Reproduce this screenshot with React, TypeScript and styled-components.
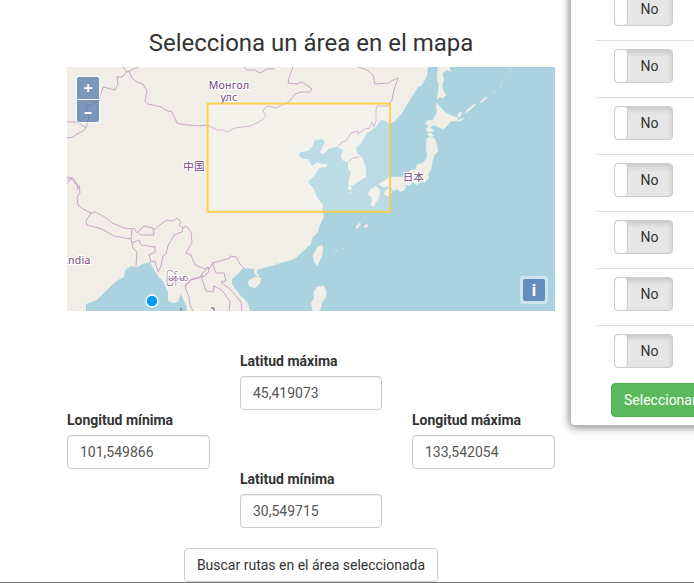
import React from "react";
import styled, { createGlobalStyle } from "styled-components";

const Global = createGlobalStyle`
  * { box-sizing: border-box; }
  html, body { margin: 0; overflow: hidden; background: #fff; }
  body { font: 14px/20px Roboto, sans-serif; color: #333; }
`;

const Page = styled.div`
  display: flex;
  align-items: flex-start;
  width: 694px;
  height: 583px;
  overflow: hidden;
  border-bottom: 1px solid #777;
`;

const Main = styled.main`
  width: 488px;
  margin: 0 15px 0 67px;
  padding-top: 30px;
  flex: none;
`;

const Title = styled.h3`
  margin: 0 0 10px;
  font-size: 24px;
  line-height: 27px;
  font-weight: 400;
  text-align: center;
`;

const MapFrame = styled.div`
  position: relative;
  height: 244px;
  svg { display: block; }
`;

const Control = styled.div<{ $corner: "zoom" | "info" }>`
  position: absolute;
  ${(p) => (p.$corner === "zoom" ? "left: 8px; top: 8px;" : "right: 7px; bottom: 7px;")}
  display: grid;
  gap: 1px;
  padding: ${(p) => (p.$corner === "zoom" ? "2px" : "3px")};
  border-radius: 4px;
  background: rgba(255, 255, 255, 0.4);
`;

const MapButton = styled.button<{ $part?: "top" | "bottom" }>`
  width: 22px;
  height: 22px;
  border: 0;
  padding: 0;
  color: #fff;
  background: ${(p) => (p.$part ? "rgba(0, 60, 136, 0.5)" : "rgba(46, 94, 164, 0.66)")};
  border-radius: ${(p) => (p.$part === "top" ? "2px 2px 0 0" : p.$part === "bottom" ? "0 0 2px 2px" : "2px")};
  font: 700 16px/22px "Open Sans", sans-serif;
`;

const Fields = styled.div`
  display: grid;
  grid-template-columns: 143px 142px 143px;
  grid-template-rows: repeat(3, 59px);
  column-gap: 30px;
  margin-top: 40px;
`;

const Field = styled.label<{ $col: number; $row: number }>`
  grid-column: ${(p) => p.$col};
  grid-row: ${(p) => p.$row};
  font-weight: 700;
  white-space: nowrap;
`;

const Input = styled.input`
  display: block;
  width: 100%;
  height: 34px;
  margin-top: 5px;
  padding: 6px 12px;
  border: 1px solid #ccc;
  border-radius: 4px;
  box-shadow: inset 0 1px 1px rgba(0, 0, 0, 0.075);
  color: #555;
  background: #fff;
  font: 14px/20px Roboto, sans-serif;
`;

const Button = styled.button<{ $green?: boolean }>`
  display: block;
  height: 34px;
  padding: 6px 12px;
  border: 1px solid ${(p) => (p.$green ? "#4cae4c" : "#ccc")};
  border-radius: 4px;
  color: ${(p) => (p.$green ? "#fff" : "#333")};
  background: ${(p) => (p.$green ? "#5cb85c" : "#fff")};
  font: 14px/20px Roboto, sans-serif;
  white-space: nowrap;
`;

const Actions = styled.div`
  display: flex;
  justify-content: center;
  margin-top: 20px;
`;

const Panel = styled.aside`
  width: 200px;
  height: 446px;
  margin-top: -20px;
  padding: 3px 0 0 25px;
  flex: none;
  border: 1px solid #bbb;
  border-radius: 4px;
  box-shadow: 0 1px 10px rgba(0, 0, 0, 0.55);
  background: #fff;
  margin-left: 0;
`;

const SwitchRow = styled.div`
  height: 57px;
  padding: 8px 0 0 18px;
  border-bottom: 1px solid #ddd;
  &:last-of-type { border-bottom: 0; }
`;

const Switch = styled.div`
  display: flex;
  width: 59px;
  height: 34px;
  border: 1px solid #ccc;
  border-radius: 4px;
  overflow: hidden;
  background: #e6e6e6;
  box-shadow: inset 0 3px 5px rgba(0, 0, 0, 0.125);
`;

const Handle = styled.span`
  width: 13px;
  border-right: 1px solid #ccc;
  border-radius: 4px;
  background: #fff;
`;

const SwitchText = styled.span`
  flex: 1;
  line-height: 32px;
  text-align: center;
  padding-right: 1px;
`;

const PanelAction = styled.footer`
  padding: 0 0 0 15px;
`;

const seaMain =
  "M428 67 427 75 425 80 421 86 418 87 413 95 408 103 402 113 395 121 390 124 385 121 382 120 380 121 376 127 367 133 362 142 356 148 357 153 362 157 366 168 366 177 358 182 354 185 349 186 348 182 351 173 348 168 348 163 349 161 346 162 342 160 341 155 343 150 337 147 328 149 326 152 322 154 320 152 325 142 322 139 315 140 312 147 308 151 300 152 299 156 303 159 308 159 312 166 318 162 321 164 327 164 327 167 319 168 315 175 308 182 314 189 317 197 323 205 322 212 324 216 319 227 318 232 312 238 311 244 301 253 296 258 289 261 280 263 278 265 276 262 276 265 267 267 257 270 257 274 259 275 258 277 254 273 254 269 243 268 239 273 232 279 232 284 236 290 241 296 248 303 250 311H555V67Z";

const landPieces = [
  "M438 67 437 78 439 85 438 94 437 99 440 97 443 98 446 95 443 91 442 85 444 79 442 74 446 70 451 71 449 67Z",
  "M437 103 441 108 446 113 452 116 458 118 456 121 451 121 446 127 443 129 434 125 430 127 434 131 428 132 426 129 429 126 425 124 428 120 432 121 434 118 437 112 436 106Z",
  "M427 138 431 137 435 139 437 146 438 151 434 155 432 162 431 170 428 174 429 178 424 183 420 180 417 185 413 182 410 185 403 185 401 188 397 187 391 188 387 186 382 187 379 184 384 181 388 178 394 177 402 177 407 174 411 170 415 170 418 165 424 162 427 158 427 153 426 149Z",
  "M427 134 431 133 434 136 430 137Z",
  "M370 190 376 186 380 190 379 198 375 203 374 207 371 205 372 198 368 194Z",
  "M385 191 390 188 392 192 388 196 384 194Z",
  "M392 188 400 185 406 186 405 189 401 192 397 189 393 191Z",
  "M322 245 323 247 322 255 317 266 314 261 313 255 318 247Z",
  "M251 279 256 277 261 278 260 283 255 288 249 286 248 282Z",
  "M317 287 324 286 326 291 326 297 322 302 321 308 319 311 313 311 311 303 314 299 314 292Z",
  "M417 165 419 164 418 167 422 169 417 170Z M457 116 460 112 462 113 460 117Z M466 111 473 105 476 104 471 109 466 113Z M480 102 486 97 487 98 482 102Z M456 121 464 118 461 121Z M349 186 352 188 351 190 348 189Z M356 226 360 223 361 224 357 229Z M364 226 367 224 368 226 365 228Z",
  "M493 94 496 91M500 87 503 81M508 73 511 68M334 251 338 250M342 249 344 248M349 185h5M348 193h4",
];

const borders = [
  "M123 67 127 72 138 67M127 72 122 77 117 77 118 84 115 90 103 87 99 101 86 107 89 118 86 128M67 122H77L86 128 83 131 75 135 73 137 67 138M129 71 132 78 137 82 143 84 147 91 145 101 148 104 162 107 165 110 172 112 177 123 180 124 197 126 207 125 217 130 224 130 227 132 235 128 250 126 257 123 262 120 266 116 263 111 267 106 276 108 289 102 295 94 301 92 310 92 312 89 302 82 297 84 288 83 289 78 293 67",
  "M244 67 247 70 255 70 260 73 267 69 275 69M358 67 367 70 373 75 375 84 389 83 391 81 398 78 394 90 392 100 388 106 377 106 376 109 376 121 374 127 372 122 369 129 366 128 358 134 358 131 351 133 347 140 341 143 337 148M349 161 353 158 359 157",
  "M67 180 71 178 79 188M67 184 72 178M67 177 73 178 77 184 78 190M79 185 80 193 77 197 78 205 83 209 91 213M91 213 95 212 105 217 112 223 124 228 132 229 131 239 114 236 102 229 87 225 86 221 91 213M132 229 134 228 137 233 144 226 153 228 154 235 141 235 137 232M154 230 161 224 167 220 173 221 177 218 181 222 179 225 183 228 186 226 191 232 192 242 186 253 191 255 195 265 205 269 208 267 209 271 205 276 192 279 185 287",
  "M183 228 182 232 174 235 168 246 166 254 163 256 161 266 158 272M131 239 133 248 137 252 136 266M132 243 139 240 141 245 155 247 155 252 149 255 151 262 155 261 158 272M209 269 213 263 230 258 230 256 236 257 240 264 244 268M208 267 202 274 202 279 206 291 213 292 214 286 220 289 225 294 230 302 229 311M212 262 216 273 224 273 226 281 221 282 231 290 241 302 242 311M185 287 189 297 190 305 193 311M202 274 199 278 190 280 185 286",
];

const placeNames = [
  { x: 229, y: 88.5, text: "Монгол", size: 10.5 },
  { x: 229, y: 100.5, text: "улс", size: 10.5 },
  { x: 194, y: 169.5, text: "中国", size: 10.5 },
  { x: 413.5, y: 181, text: "日本", size: 10.5 },
  { x: 77.5, y: 264, text: "India", size: 10.5 },
  { x: 177, y: 281, text: "မြန်မာ", size: 10.5 },
];

function RegionMap() {
  return (
    <svg width="488" height="244" viewBox="67 67 488 244">
      <rect x="67" y="67" width="488" height="244" fill="#f1eee8" />
      <path d={seaMain} fill="#aad3df" />
      <path
        d="M86 311 86 304 92 302 97 300 105 292 112 285 118 280 124 277 125 270 131 266 137 267 143 264 150 262 153 268 158 276 163 281 166 288 168 292 168 301 173 303 178 302 181 294 183 299 186 305 187 311Z"
        fill="#aad3df"
      />
      <path d={landPieces.join("")} fill="#f1eee8" stroke="#f1eee8" strokeWidth=".5" />
      <path d={borders.join("")} fill="none" stroke="#c79bc6" strokeWidth=".9" strokeLinejoin="round" />
      <g
        fill="#77457c"
        stroke="#fff"
        strokeWidth="2"
        paintOrder="stroke"
        textAnchor="middle"
        fontFamily="'Noto Sans', 'Noto Sans CJK SC', sans-serif"
        letterSpacing=".25"
      >
        {placeNames.map((p) => (
          <text key={p.text} x={p.x} y={p.y} fontSize={p.size}>{p.text}</text>
        ))}
      </g>
      <path d="M181 308v3M211 308h3v3" fill="none" stroke="#77457c" />
      <rect x="207.6" y="103.6" width="182.4" height="108.2" fill="#fff" fillOpacity=".2" stroke="#fc3" strokeOpacity=".85" strokeWidth="2" />
      <circle cx="152" cy="301" r="6" fill="#0099ff" stroke="#fff" strokeWidth="1.5" />
    </svg>
  );
}

const fields = [
  { label: "Latitud máxima", value: "45,419073", col: 2, row: 1 },
  { label: "Longitud mínima", value: "101,549866", col: 1, row: 2 },
  { label: "Longitud máxima", value: "133,542054", col: 3, row: 2 },
  { label: "Latitud mínima", value: "30,549715", col: 2, row: 3 },
];

export default function App() {
  return (
    <>
      <Global />
      <Page>
        <Main>
          <Title>Selecciona un área en el mapa</Title>
          <MapFrame>
            <RegionMap />
            <Control $corner="zoom">
              <MapButton $part="top">+</MapButton>
              <MapButton $part="bottom">–</MapButton>
            </Control>
            <Control $corner="info">
              <MapButton>i</MapButton>
            </Control>
          </MapFrame>
          <Fields>
            {fields.map((f) => (
              <Field key={f.label} $col={f.col} $row={f.row}>
                {f.label}
                <Input defaultValue={f.value} />
              </Field>
            ))}
          </Fields>
          <Actions>
            <Button>Buscar rutas en el área seleccionada</Button>
          </Actions>
        </Main>
        <Panel>
          {Array.from({ length: 7 }, (_, i) => (
            <SwitchRow key={i}>
              <Switch>
                <Handle />
                <SwitchText>No</SwitchText>
              </Switch>
            </SwitchRow>
          ))}
          <PanelAction>
            <Button $green>Seleccionar</Button>
          </PanelAction>
        </Panel>
      </Page>
    </>
  );
}
